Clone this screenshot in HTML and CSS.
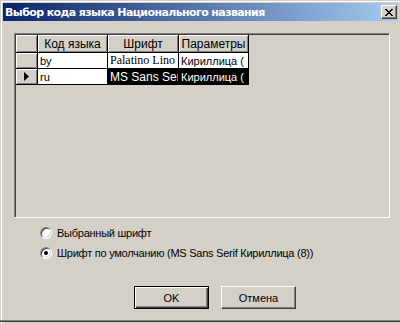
FILE: index.html
```html
<!DOCTYPE html>
<html lang="ru">
<head>
<meta charset="utf-8">
<title>Выбор кода языка</title>
<link rel="stylesheet" href="styles.css">
</head>
<body>
<div class="window">
  <div class="titlebar">
    <span class="title">Выбор кода языка Национального названия</span>
    <span class="close">
      <svg width="8" height="7" viewBox="0 0 8 7"><path d="M0 0h2v1h1v1h2v-1h1v-1h2v1h-1v1h-1v1h-1v1h1v1h1v1h1v1h-2v-1h-1v-1h-2v1h-1v1h-2v-1h1v-1h1v-1h1v-1h-1v-1h-1v-1h-1z" fill="#000"/></svg>
    </span>
  </div>
  <div class="client">
    <div class="gridbox">
      <table class="grid">
        <colgroup><col class="w0"><col class="w1"><col class="w2"><col class="w3"></colgroup>
        <tr class="head">
          <td class="ind"></td>
          <td>Код языка</td>
          <td>Шрифт</td>
          <td>Параметры</td>
        </tr>
        <tr class="row">
          <td class="ind"></td>
          <td>by</td>
          <td class="serif">Palatino Lino</td>
          <td>Кириллица (</td>
        </tr>
        <tr class="row cur">
          <td class="ind"><svg width="5" height="9" viewBox="0 0 5 9"><path d="M0 0L5 4.5L0 9z" fill="#000"/></svg></td>
          <td>ru</td>
          <td class="sel big">MS Sans Serif</td>
          <td class="sel">Кириллица (</td>
        </tr>
      </table>
    </div>
    <div class="radios">
      <label class="radio"><span class="circle"></span><span>Выбранный шрифт</span></label>
      <label class="radio"><span class="circle on"><span class="dot"></span></span><span>Шрифт по умолчанию (MS Sans Serif Кириллица (8))</span></label>
    </div>
    <div class="buttons">
      <span class="btn def"><span class="face">OK</span></span>
      <span class="btn"><span class="face">Отмена</span></span>
    </div>
  </div>
  <div class="bottom-edge"></div>
</div>
</body>
</html>
```

FILE: styles.css
```css
html, body {
  margin: 0;
  padding: 0;
  background: #d4d0c8;
}
.window {
  width: 400px;
  height: 324px;
  overflow: hidden;
  background: #d4d0c8;
  box-shadow: inset 1px 1px 0 #d4d0c8, inset 2px 2px 0 #ffffff;
  font-family: "Liberation Sans", Arial, sans-serif;
  font-size: 11px;
  color: #000;
  display: flex;
  flex-direction: column;
}
.titlebar {
  margin: 3px 2px 0 3px;
  height: 18px;
  background: linear-gradient(to right, #0a246a, #a6caf0);
  display: flex;
  align-items: center;
  justify-content: space-between;
  padding: 0 1px 0 2px;
}
.title {
  color: #fff;
  font-family: "DejaVu Sans", Verdana, sans-serif;
  font-weight: bold;
  font-size: 11px;
  letter-spacing: -0.6px;
}
.close {
  width: 16px;
  height: 14px;
  box-sizing: border-box;
  background: #d4d0c8;
  border: 1px solid;
  border-color: #fff #404040 #404040 #fff;
  box-shadow: inset -1px -1px 0 #808080;
  display: flex;
  align-items: center;
  justify-content: center;
}
.client {
  flex: 1;
  display: flex;
  flex-direction: column;
}
.gridbox {
  margin: 12px 0 0 14px;
  width: 376px;
  height: 185px;
  box-sizing: border-box;
  border: 1px solid;
  border-color: #808080 #fff #fff #808080;
  box-shadow: inset 1px 1px 0 #404040, inset -1px -1px 0 #d4d0c8;
  padding: 1px;
  background: #d4d0c8;
}
.grid {
  border-collapse: separate;
  border-spacing: 0;
  table-layout: fixed;
  width: 233px;
}
.w0 { width: 22px; }
.w1 { width: 70px; }
.w2 { width: 71px; }
.w3 { width: 70px; }
.grid td {
  padding: 0 0 0 2px;
  border-right: 1px solid #000;
  border-bottom: 1px solid #000;
  white-space: nowrap;
  overflow: hidden;
  box-sizing: border-box;
  background: #fff;
}
.head td {
  height: 18px;
  padding: 0;
  background: #d4d0c8;
  box-shadow: inset 1px 1px 0 #fff, inset -1px -1px 0 #808080;
  text-align: center;
  font-size: 12px;
}
.row td { height: 16px; }
.grid .ind {
  padding: 0;
  background: #d4d0c8;
  box-shadow: inset 1px 1px 0 #fff, inset -1px -1px 0 #808080;
  text-align: center;
  vertical-align: middle;
  line-height: 0;
}
.serif {
  font-family: "Liberation Serif", "Times New Roman", serif;
  font-size: 12px;
}
.big { font-size: 12px; }
.sel {
  background: #000 !important;
  color: #fff;
}
.radios {
  margin: 8px 0 0 40px;
  display: flex;
  flex-direction: column;
  gap: 7px;
  letter-spacing: -0.25px;
}
.radio {
  display: flex;
  align-items: center;
  gap: 5px;
  height: 13px;
}
.circle {
  width: 12px;
  height: 12px;
  box-sizing: border-box;
  border-radius: 50%;
  border: 1px solid;
  border-color: #808080 #fff #fff #808080;
  box-shadow: inset 1px 1px 0 #404040, inset -1px -1px 0 #d4d0c8;
  background: #fff;
  display: flex;
  align-items: center;
  justify-content: center;
}
.dot {
  width: 4px;
  height: 4px;
  border-radius: 50%;
  background: #000;
}
.buttons {
  margin: 27px 0 0 134px;
  display: flex;
  gap: 12px;
}
.btn {
  width: 75px;
  height: 23px;
  box-sizing: border-box;
  border: 1px solid;
  border-color: #fff #404040 #404040 #fff;
  box-shadow: inset -1px -1px 0 #808080;
  display: flex;
}
.btn.def {
  border: 1px solid #000;
  box-shadow: inset 1px 1px 0 #fff, inset -1px -1px 0 #404040, inset -2px -2px 0 #808080;
}
.face {
  flex: 1;
  display: flex;
  align-items: center;
  justify-content: center;
}
.bottom-edge {
  height: 2px;
  margin-bottom: 2px;
  border-top: 1px solid #808080;
  background: #404040;
  box-sizing: border-box;
}
```
